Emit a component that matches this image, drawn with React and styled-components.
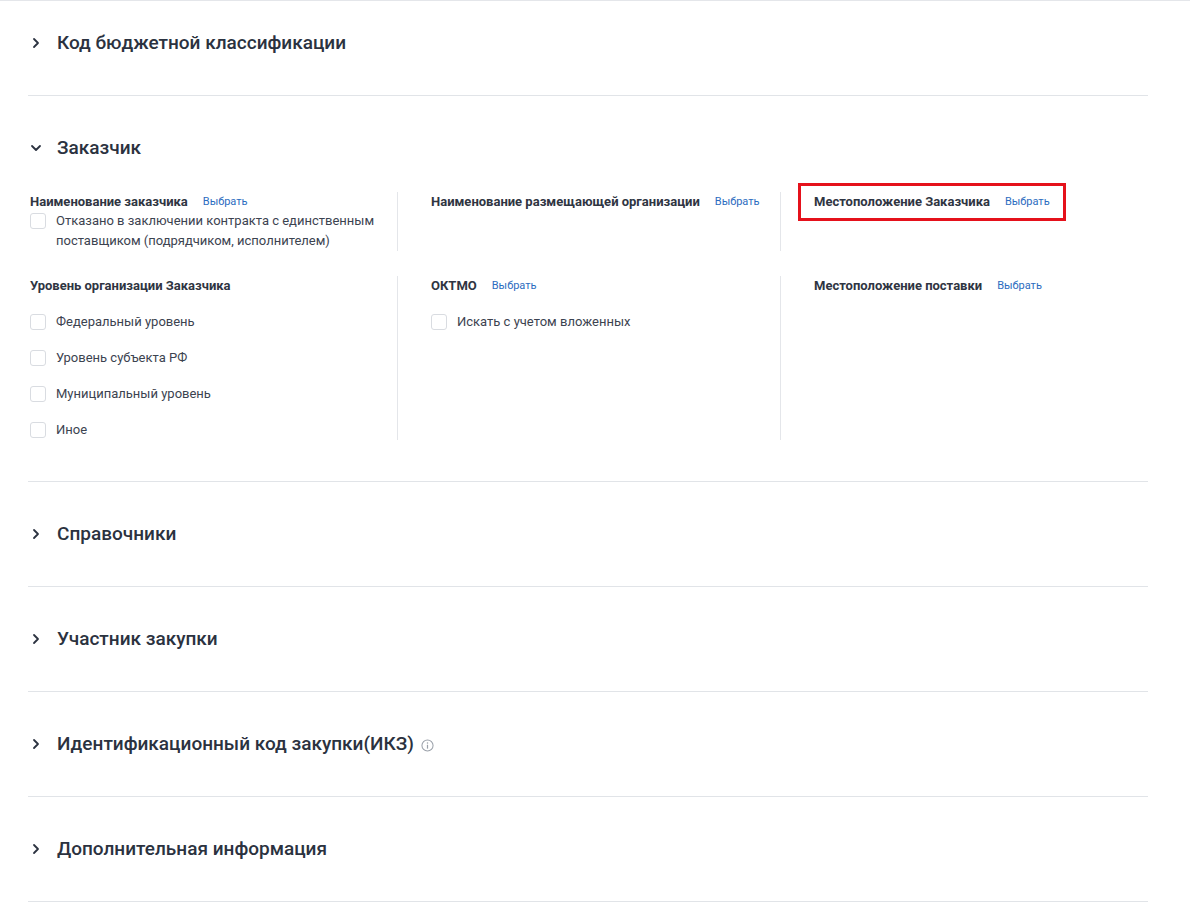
import React from "react";
import styled, { createGlobalStyle } from "styled-components";

const GlobalStyle = createGlobalStyle`
  body {
    margin: 0;
    background: #ffffff;
    font-family: Roboto, "Noto Sans", sans-serif;
    color: #2b3240;
  }
`;

const sections = [
  { id: "kbk", title: "Код бюджетной классификации" },
  { id: "customer", title: "Заказчик", open: true },
  { id: "refs", title: "Справочники" },
  { id: "member", title: "Участник закупки" },
  { id: "ikz", title: "Идентификационный код закупки(ИКЗ)", info: true },
  { id: "extra", title: "Дополнительная информация" },
];

function Chevron({ open }) {
  return (
    <svg width="16" height="16" viewBox="0 0 16 16">
      <path
        d={open ? "M4 6l4 4 4-4" : "M6 4l4 4-4 4"}
        fill="none"
        stroke="#2b3240"
        strokeWidth="1.8"
        strokeLinecap="round"
        strokeLinejoin="round"
      />
    </svg>
  );
}

function InfoIcon() {
  return (
    <svg width="13" height="13" viewBox="0 0 14 14">
      <circle cx="7" cy="7" r="6" fill="none" stroke="#9aa0a9" strokeWidth="1.1" />
      <circle cx="7" cy="4.2" r="0.8" fill="#9aa0a9" />
      <path d="M7 6.2v4.2" stroke="#9aa0a9" strokeWidth="1.3" />
    </svg>
  );
}

function Field({ label, pick, highlighted, children }) {
  return (
    <Column>
      <LabelRow highlighted={highlighted}>
        <Label>{label}</Label>
        {pick && <Pick>Выбрать</Pick>}
      </LabelRow>
      {children}
    </Column>
  );
}

function Check({ children }) {
  return (
    <CheckRow>
      <Box />
      <CheckText>{children}</CheckText>
    </CheckRow>
  );
}

function CustomerBody() {
  return (
    <Body>
      <FieldRow>
        <Field label="Наименование заказчика" pick>
          <Checks tight>
            <Check>
              Отказано в заключении контракта с единственным поставщиком
              (подрядчиком, исполнителем)
            </Check>
          </Checks>
        </Field>
        <Field label="Наименование размещающей организации" pick />
        <Field label="Местоположение Заказчика" pick highlighted />
      </FieldRow>
      <FieldRow>
        <Field label="Уровень организации Заказчика">
          <Checks>
            <Check>Федеральный уровень</Check>
            <Check>Уровень субъекта РФ</Check>
            <Check>Муниципальный уровень</Check>
            <Check>Иное</Check>
          </Checks>
        </Field>
        <Field label="ОКТМО" pick>
          <Checks>
            <Check>Искать с учетом вложенных</Check>
          </Checks>
        </Field>
        <Field label="Местоположение поставки" pick />
      </FieldRow>
    </Body>
  );
}

export default function App() {
  return (
    <>
      <GlobalStyle />
      <TopRule />
      <Page>
        {sections.map((s) => (
          <Section key={s.id}>
            <Header open={s.open}>
              <Chevron open={s.open} />
              <Title>{s.title}</Title>
              {s.info && <InfoIcon />}
            </Header>
            {s.open && <CustomerBody />}
          </Section>
        ))}
      </Page>
    </>
  );
}

const TopRule = styled.div`
  height: 1px;
  background: #e4e6ea;
`;

const Page = styled.div`
  width: 1120px;
  margin-left: 28px;
`;

const Section = styled.section`
  border-bottom: 1px solid #e1e4e8;
  &:first-child > div:first-child {
    padding-top: 30px;
  }
`;

const Header = styled.div`
  display: flex;
  align-items: center;
  gap: 13px;
  padding: 40px 0 ${(p) => (p.open ? "0" : "40px")} 0;
  height: 24px;
  box-sizing: content-box;
  cursor: pointer;
  svg:first-child {
    flex: none;
  }
`;

const Title = styled.h3`
  margin: 0 -6px 0 0;
  font-size: 19px;
  line-height: 24px;
  font-weight: 500;
  color: #2b3240;
  & + svg {
    margin-top: 2px;
  }
`;

const Body = styled.div`
  display: flex;
  flex-direction: column;
  gap: 25px;
  padding: 32px 0 41px 2px;
`;

const FieldRow = styled.div`
  display: grid;
  grid-template-columns: 367px 383px 1fr;
`;

const Column = styled.div`
  display: flex;
  flex-direction: column;
  align-items: flex-start;
  & + & {
    border-left: 1px solid #e4e6ea;
    padding-left: 33px;
  }
`;

const LabelRow = styled.div`
  position: relative;
  display: flex;
  align-items: center;
  gap: 15px;
  height: 18px;
  ${(p) =>
    p.highlighted &&
    `
    &::after {
      content: "";
      position: absolute;
      top: -9px;
      bottom: -11px;
      left: -16px;
      right: -16px;
      border: 3px solid #e5111b;
    }
  `}
`;

const Label = styled.span`
  font-size: 13px;
  font-weight: 700;
  color: #2f3542;
`;

const Pick = styled.a`
  font-size: 11px;
  color: #2c6cc0;
  cursor: pointer;
`;

const Checks = styled.div`
  display: flex;
  flex-direction: column;
  gap: 16px;
  margin-top: ${(p) => (p.tight ? "1px" : "18px")};
`;

const CheckRow = styled.label`
  display: flex;
  align-items: flex-start;
  gap: 10px;
`;

const Box = styled.span`
  flex: none;
  width: 14px;
  height: 14px;
  margin-top: 2px;
  border: 1px solid #d9dce1;
  border-radius: 3px;
  background: #fff;
`;

const CheckText = styled.span`
  max-width: 330px;
  font-size: 13px;
  line-height: 20px;
  color: #3c4350;
`;
